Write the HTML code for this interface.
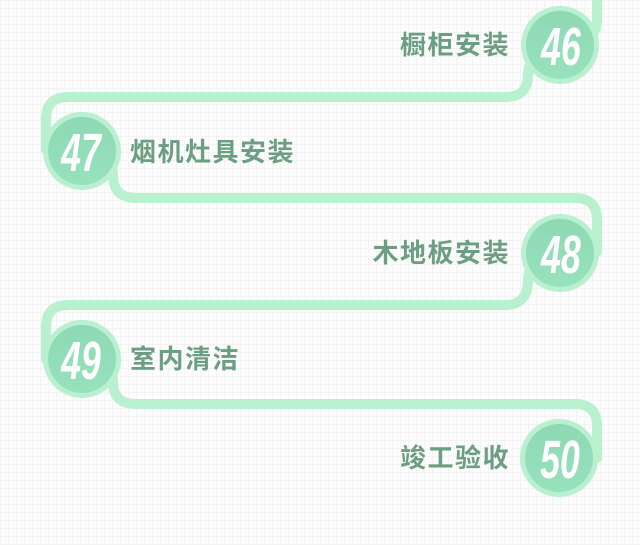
<!DOCTYPE html>
<html><head><meta charset="utf-8"><style>
html,body{margin:0;padding:0;}
body{width:640px;height:545px;overflow:hidden;position:relative;
background-color:#fcfcfc;
background-image:linear-gradient(#f3f3f3 1px,transparent 1px),linear-gradient(90deg,#f3f3f3 1px,transparent 1px);
background-size:8px 8px;}
svg{position:absolute;left:0;top:0}
.t{position:absolute;font-family:"Liberation Sans","Noto Sans CJK SC",sans-serif;font-size:26px;font-weight:bold;color:#6c9e81;line-height:30px;letter-spacing:1.5px}
.r{text-align:right;right:130px}
.l{left:130px}
</style></head><body>
<svg width="640" height="545" viewBox="0 0 640 545">
<defs>
<linearGradient id="g" x1="0" y1="0" x2="0" y2="1">
<stop offset="0" stop-color="#8ed9b3"/><stop offset="1" stop-color="#97e2bd"/>
</linearGradient>
</defs>
<g fill="none" stroke="#b8f0d0" stroke-width="10" stroke-linecap="round">
<path d="M597,-10 V20 Q597,45 560,45"/>
<path d="M560,45 C540,45 528,60 528,75 Q528,97 505,97 H68 Q46,97 46,119 V150"/>
<path d="M82,150 C100,150 113,160 113,175 Q113,198 136,198 H575 Q597,198 597,220 V252"/>
<path d="M560,252 C540,252 528,266 528,280 Q528,305 505,305 H68 Q46,305 46,327 V359"/>
<path d="M82,359 C100,359 113,368 113,382 Q113,404 136,404 H575 Q597,404 597,426 V458"/>
</g>
<g>
<circle cx="560" cy="45" r="39" fill="#b8f0d0"/><circle cx="560" cy="45" r="34" fill="url(#g)"/>
<circle cx="82" cy="151" r="39" fill="#b8f0d0"/><circle cx="82" cy="151" r="34" fill="url(#g)"/>
<circle cx="560" cy="253" r="39" fill="#b8f0d0"/><circle cx="560" cy="253" r="34" fill="url(#g)"/>
<circle cx="82" cy="359" r="39" fill="#b8f0d0"/><circle cx="82" cy="359" r="34" fill="url(#g)"/>
<circle cx="559" cy="458" r="39" fill="#b8f0d0"/><circle cx="559" cy="458" r="34" fill="url(#g)"/>
</g>
<g font-family="Liberation Sans" font-weight="bold" font-style="italic" font-size="54" fill="#fff" text-anchor="middle">
<text transform="translate(561,65) scale(0.66,1)">46</text>
<text transform="translate(81,171) scale(0.66,1)">47</text>
<text transform="translate(561,273) scale(0.66,1)">48</text>
<text transform="translate(81,379) scale(0.66,1)">49</text>
<text transform="translate(560,478) scale(0.66,1)">50</text>
</g>
</svg>
<div class="t r" style="top:30px">橱柜安装</div>
<div class="t l" style="top:137px">烟机灶具安装</div>
<div class="t r" style="top:238px">木地板安装</div>
<div class="t l" style="top:344px">室内清洁</div>
<div class="t r" style="top:443px">竣工验收</div>
</body></html>
